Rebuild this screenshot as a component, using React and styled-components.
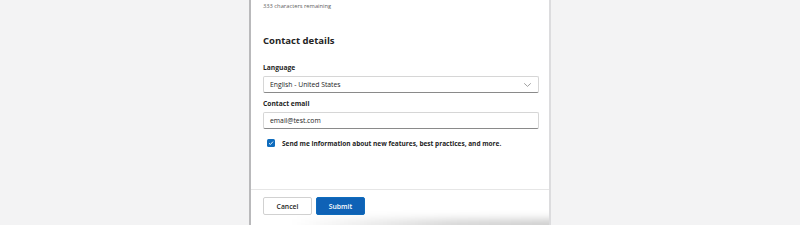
import React from "react";
import styled, { createGlobalStyle } from "styled-components";

const Global = createGlobalStyle`
  html, body { margin: 0; padding: 0; }
  body {
    background: #f3f3f4;
    font-family: "Open Sans", "Noto Sans", sans-serif;
    color: #242424;
    width: 800px;
    height: 225px;
    overflow: hidden;
  }
`;

const Page = styled.div`
  display: flex;
  justify-content: flex-start;
  padding-left: 249px;
  height: 225px;
`;

const Panel = styled.div`
  width: 302px;
  height: 225px;
  background: #ffffff;
  border-left: 2px solid #b9b9bb;
  border-right: 2px solid #dcdcde;
  display: flex;
  flex-direction: column;
  position: relative;
  box-sizing: border-box;
  overflow: hidden;
`;

const Body = styled.div`
  padding: 2px 10px 0 12px;
  display: flex;
  flex-direction: column;
  flex: 1;
`;

const Hint = styled.div`
  font-size: 5.75px;
  color: #616161;
  line-height: 8px;
`;

const Heading = styled.h2`
  margin: 24px 0 0;
  font-size: 9.5px;
  font-weight: 700;
  line-height: 14px;
  color: #242424;
`;

const Label = styled.label`
  display: block;
  font-size: 6.7px;
  font-weight: 700;
  line-height: 10px;
  margin-top: ${(p) => p.$top}px;
  color: #242424;
`;

const Field = styled.div`
  margin-top: 3px;
  height: 17px;
  box-sizing: border-box;
  border: 1px solid #d6d6d6;
  border-bottom-color: #8a8a8a;
  border-radius: 2px;
  display: flex;
  align-items: center;
  justify-content: space-between;
  padding: 0 6px 0 6px;
  font-size: 6.8px;
  color: #242424;
`;

const CheckRow = styled.div`
  display: flex;
  align-items: center;
  gap: 7px;
  margin-top: 9px;
  padding-left: 4px;
  height: 10px;
  font-size: 6.5px;
  font-weight: 700;
  color: #242424;
`;

const Box = styled.span`
  width: 8px;
  height: 8px;
  border-radius: 1.5px;
  background: #0f6cbd;
  display: flex;
  align-items: center;
  justify-content: center;
`;

const Footer = styled.div`
  border-top: 1px solid #e6e6e6;
  padding: 7px 12px 10px;
  display: flex;
  gap: 4px;
`;

const Button = styled.button`
  width: 49px;
  height: 18px;
  box-sizing: border-box;
  border-radius: 2px;
  font-family: inherit;
  font-size: 6.8px;
  font-weight: 600;
  padding: 0;
  border: 1px solid ${(p) => (p.$primary ? "#0f6cbd" : "#d1d1d1")};
  background: ${(p) => (p.$primary ? "#0f62b6" : "#ffffff")};
  color: ${(p) => (p.$primary ? "#ffffff" : "#242424")};
`;

const Shade = styled.div`
  position: absolute;
  left: 40px;
  right: -10px;
  bottom: -8px;
  height: 14px;
  background: linear-gradient(to right, rgba(0,0,0,0), rgba(0,0,0,0.16) 60%, rgba(0,0,0,0.2));
  filter: blur(4px);
  pointer-events: none;
`;

export default function App() {
  return (
    <>
      <Global />
      <Page>
        <Panel>
          <Body>
            <Hint>333 characters remaining</Hint>
            <Heading>Contact details</Heading>
            <Label $top={15}>Language</Label>
            <Field>
              <span>English - United States</span>
              <svg width="9" height="6" viewBox="0 0 9 6">
                <path d="M1.2 1.3 L4.5 4.4 L7.8 1.3" fill="none" stroke="#8a8a8a" strokeWidth="0.8" />
              </svg>
            </Field>
            <Label $top={6}>Contact email</Label>
            <Field>
              <span>email@test.com</span>
            </Field>
            <CheckRow>
              <Box>
                <svg width="6" height="6" viewBox="0 0 6 6">
                  <path d="M1 3.2 L2.4 4.5 L5 1.6" fill="none" stroke="#fff" strokeWidth="0.9" />
                </svg>
              </Box>
              <span>Send me information about new features, best practices, and more.</span>
            </CheckRow>
          </Body>
          <Footer>
            <Button>Cancel</Button>
            <Button $primary>Submit</Button>
          </Footer>
          <Shade />
        </Panel>
      </Page>
    </>
  );
}
